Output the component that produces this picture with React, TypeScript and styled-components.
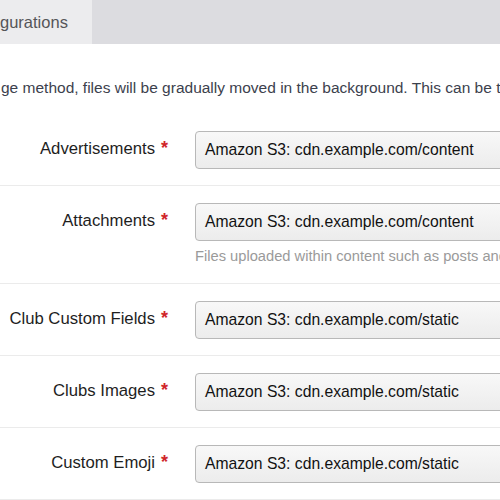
import styled, { createGlobalStyle } from "styled-components";

const GlobalStyle = createGlobalStyle`
  html, body {
    margin: 0;
    padding: 0;
    background: #ffffff;
  }
  body {
    font-family: "Liberation Sans", Arial, sans-serif;
    overflow: hidden;
  }
`;

type Field = {
  label: string;
  value: string;
  help?: string;
};

const fields: Field[] = [
  { label: "Advertisements", value: "Amazon S3: cdn.example.com/content" },
  {
    label: "Attachments",
    value: "Amazon S3: cdn.example.com/content",
    help: "Files uploaded within content such as posts and messages",
  },
  { label: "Club Custom Fields", value: "Amazon S3: cdn.example.com/static" },
  { label: "Clubs Images", value: "Amazon S3: cdn.example.com/static" },
  { label: "Custom Emoji", value: "Amazon S3: cdn.example.com/static" },
];

const App = () => {
  return (
    <Page>
      <GlobalStyle />
      <TabBar>
        <Tab $active>gurations</Tab>
      </TabBar>
      <Intro>
        ge method, files will be gradually moved in the background. This can be time consuming.
      </Intro>
      <Form>
        {fields.map((f) => (
          <Row key={f.label}>
            <Label>
              {f.label}
              <Required>*</Required>
            </Label>
            <Control>
              <Select>{f.value}</Select>
              {f.help && <Help>{f.help}</Help>}
            </Control>
          </Row>
        ))}
      </Form>
    </Page>
  );
};

const Page = styled.div`
  width: 500px;
  height: 500px;
  overflow: hidden;
`;

const TabBar = styled.div`
  display: flex;
  height: 44px;
  background: #dcdce0;
`;

const Tab = styled.div<{ $active?: boolean }>`
  width: 92px;
  display: flex;
  align-items: center;
  font-size: 16.5px;
  color: #555558;
  background: ${(p) => (p.$active ? "#ececee" : "transparent")};
`;

const Intro = styled.p`
  margin: 0;
  padding: 34px 0 0 1px;
  height: 70px;
  box-sizing: border-box;
  font-size: 15.5px;
  color: #3c414d;
  white-space: nowrap;
  line-height: 20px;
`;

const Form = styled.div`
  display: flex;
  flex-direction: column;
`;

const Row = styled.div`
  display: grid;
  grid-template-columns: 168px 1fr;
  column-gap: 27px;
  padding: 17px 0 16px;
  border-bottom: 1px solid #ebebeb;
`;

const Label = styled.div`
  height: 38px;
  display: flex;
  align-items: center;
  justify-content: flex-end;
  font-size: 16.7px;
  color: #1e1e1e;
  white-space: nowrap;
  padding-bottom: 3px;
  box-sizing: border-box;
`;

const Required = styled.span`
  color: #d0262b;
  font-weight: bold;
  margin-left: 6px;
  font-size: 18px;
`;

const Control = styled.div`
  display: flex;
  flex-direction: column;
  min-width: 0;
`;

const Select = styled.div`
  width: 340px;
  height: 38px;
  box-sizing: border-box;
  display: flex;
  align-items: center;
  padding: 0 9px;
  border: 1px solid #b8b8b8;
  border-radius: 4px;
  background: linear-gradient(#f8f8f8, #ececec);
  font-size: 15.7px;
  color: #111;
  white-space: nowrap;
`;

const Help = styled.div`
  margin-top: 5px;
  font-size: 14.7px;
  color: #9a9a9a;
  white-space: nowrap;
  line-height: 21px;
`;

export default App;
